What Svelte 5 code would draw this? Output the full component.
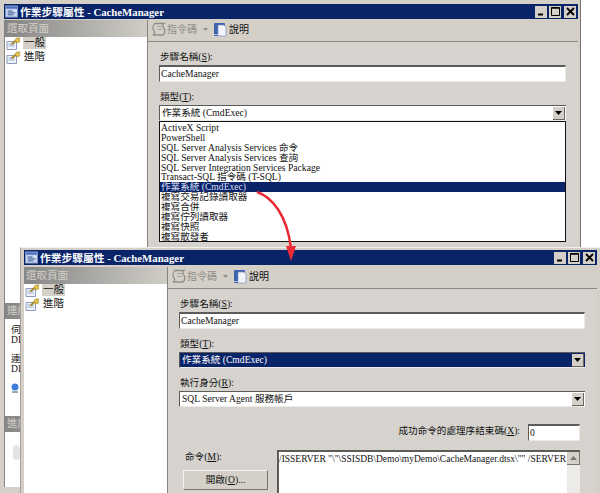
<script>
  const options = [
    'ActiveX Script',
    'PowerShell',
    'SQL Server Analysis Services 命令',
    'SQL Server Analysis Services 查詢',
    'SQL Server Integration Services Package',
    'Transact-SQL 指令碼 (T-SQL)',
    '作業系統 (CmdExec)',
    '複寫交易記錄讀取器',
    '複寫合併',
    '複寫佇列讀取器',
    '複寫快照',
    '複寫散發者'
  ];
  const selected = '作業系統 (CmdExec)';
</script>

{#snippet pageIcon()}
  <svg class="page-icon" width="15" height="13" viewBox="0 0 15 13">
    <path d="M1 4.5h9.5v8H1z" fill="#eef2fa" stroke="#8d9ab8" />
    <path d="M2.5 7h6M2.5 9h6" stroke="#9db0d6" />
    <path d="M5.5 7.5 10 3.5" stroke="#a88a2a" stroke-width="2" />
    <path d="M9 3.5 10.5 1H14l-1 2 1 1.5-2.5 1.5z" fill="#e6c445" stroke="#9a7f22" stroke-width=".6" />
  </svg>
{/snippet}

{#snippet caption()}
  <div class="titlebar">
    <svg class="win-icon" width="13" height="13" viewBox="0 0 14 13">
      <rect x=".5" y=".5" width="13" height="12" fill="#c5d3ef" stroke="#7f93c4" />
      <rect x="1" y="1" width="12" height="2.5" fill="#4a6fc0" />
      <path d="M3 6h5M3 8h8M3 10h6" stroke="#33508f" />
      <path d="M9 5.5 12 4.5 11.5 7z" fill="#e9edf7" />
    </svg>
    <span class="title">作業步驟屬性 - CacheManager</span>
    <div class="buttons">
      <span class="wbtn"><svg width="11" height="11" viewBox="0 0 11 11"><path d="M2 8.5h5" stroke="#000" stroke-width="2" /></svg></span>
      <span class="wbtn"><svg width="11" height="11" viewBox="0 0 11 11"><path d="M1.5 1.5h8v8h-8z" fill="none" stroke="#000" /><path d="M1.5 2h8" stroke="#000" stroke-width="1.5" /></svg></span>
      <span class="wbtn close"><svg width="11" height="11" viewBox="0 0 11 11"><path d="m2 2 7 7M9 2 2 9" stroke="#000" stroke-width="1.8" /></svg></span>
    </div>
  </div>
{/snippet}

{#snippet pages()}
  <div class="side-head">選取頁面</div>
  <ul class="pages">
    <li>{@render pageIcon()}<span class="active">一般</span></li>
    <li>{@render pageIcon()}<span>進階</span></li>
  </ul>
{/snippet}

{#snippet toolbar()}
  <div class="toolbar">
    <svg width="16" height="15" viewBox="0 0 16 15">
      <path d="M4 1.5h9c-1.5 1-1.5 3 0 5 1.5 2 1 5-1 6.5H2c2-1 2-3 .5-5C1.500 6 2 3 4 1.500z" fill="none" stroke="#8e8e88" stroke-width="1.300" />
      <path d="M6 4.500h5M6 7.500h5" stroke="#a8a8a2" />
    </svg>
    <span class="disabled">指令碼</span>
    <svg class="drop" width="5" height="3" viewBox="0 0 5 3"><path d="M0 0h5L2.500 3z" fill="#8e8e88" /></svg>
    <svg class="help" width="14" height="15" viewBox="0 0 14 15">
      <rect x="1" y="1" width="11" height="13" rx="1" fill="#3e62ad" />
      <path d="M5 3h6l2 2v9H5z" fill="#f3f5fb" stroke="#7c8fbe" stroke-width=".7" />
      <path d="M1 12.500h4" stroke="#a9bbe2" />
    </svg>
    <span>說明</span>
  </div>
{/snippet}

<div class="screen">
  <section class="window first">
    {@render caption()}
    <div class="body">
      <aside class="side">
        {@render pages()}
        <div class="side-head low">連線</div>
        <div class="conn">
          <p>伺服器:<br />DI</p>
          <p>連線:<br />DI</p>
          <svg width="8" height="11" viewBox="0 0 8 11"><circle cx="4" cy="4" r="3.500" fill="#3f7ddb" /><path d="M1 9h6" stroke="#9aa" stroke-width="2" /></svg>
        </div>
        <div class="side-head low">進度</div>
        <div class="spin"></div>
      </aside>
      <main class="panel">
        {@render toolbar()}
        <div class="form">
          <label class="lab" for="n1">步驟名稱(<u>S</u>):</label>
          <input id="n1" class="input" value="CacheManager" readonly />
          <div class="lab gap">類型(<u>T</u>):</div>
          <div class="combo-wrap">
            <div class="combo">
              <span class="val">作業系統 (CmdExec)</span>
              <span class="arrow"><svg width="7" height="4" viewBox="0 0 7 4"><path d="M0 0h7L3.500 4z" fill="#000" /></svg></span>
            </div>
            <ul class="list">
              {#each options as o}
                <li class:sel={o === selected}>{o}</li>
              {/each}
            </ul>
          </div>
        </div>
      </main>
    </div>
  </section>

  <section class="window second">
    {@render caption()}
    <div class="body">
      <aside class="side">
        {@render pages()}
      </aside>
      <main class="panel">
        {@render toolbar()}
        <div class="form">
          <label class="lab" for="n2">步驟名稱(<u>S</u>):</label>
          <input id="n2" class="input" value="CacheManager" readonly />
          <div class="lab gap">類型(<u>T</u>):</div>
          <div class="combo focus">
            <span class="val">作業系統 (CmdExec)</span>
            <span class="arrow"><svg width="7" height="4" viewBox="0 0 7 4"><path d="M0 0h7L3.500 4z" fill="#000" /></svg></span>
          </div>
          <div class="lab gap">執行身分(<u>R</u>):</div>
          <div class="combo">
            <span class="val">SQL Server Agent 服務帳戶</span>
            <span class="arrow"><svg width="7" height="4" viewBox="0 0 7 4"><path d="M0 0h7L3.500 4z" fill="#000" /></svg></span>
          </div>
          <div class="exit-row">
            <span class="lab">成功命令的處理序結束碼(<u>X</u>):</span>
            <input class="input code" value="0" readonly />
          </div>
          <div class="cmd-row">
            <div class="cmd-left">
              <div class="lab cmd-lab">命令(<u>M</u>):</div>
              <button class="open">開啟(<u>O</u>)...</button>
            </div>
            <div class="cmd-box">
              <div class="cmd-text">/ISSERVER "\"\SSISDB\Demo\myDemo\CacheManager.dtsx\"" /SERVER</div>
              <div class="scroll">
                <span class="up"><svg width="7" height="4" viewBox="0 0 7 4"><path d="M0 4h7L3.500 0z" fill="#777" /></svg></span>
              </div>
            </div>
          </div>
        </div>
      </main>
    </div>
  </section>

  <svg class="arrow-over" width="600" height="493" viewBox="0 0 600 493">
    <path d="M257 192C272 197 287 215 291 248" fill="none" stroke="#ea2a35" stroke-width="2.500" />
    <path d="M286 246h10l-5 15z" fill="#ea2a35" />
  </svg>
</div>

<style>
  :global(body) {
    margin: 0;
    background: #fff;
  }
  .screen {
    position: relative;
    width: 600px;
    height: 493px;
    overflow: hidden;
    background: #fff;
    font-family: "Liberation Serif", "Noto Sans CJK TC", serif;
    font-size: 9.600px;
    line-height: 12px;
    color: #111;
  }
  .window {
    position: absolute;
    box-sizing: border-box;
    display: flex;
    flex-direction: column;
    background: #d4d0c8;
  }
  .first {
    left: 0;
    top: 0;
    width: 581px;
    height: 493px;
    padding: 4px 2px 0 4px;
    border-right: 1px solid #77756f;
  }
  .second {
    left: 20px;
    top: 247px;
    width: 580px;
    height: 246px;
    padding: 2px 3px 0 3px;
    border-left: 1px solid #a4a19a;
    border-top: 1px solid #f2f1ed;
  }
  .titlebar {
    flex: none;
    height: 15px;
    display: flex;
    align-items: center;
    gap: 2px;
    padding: 0 2px 0 1px;
    background: #0a246a;
    color: #fff;
    font-size: 10.750px;
    font-weight: 700;
  }
  .win-icon {
    flex: none;
  }
  .title {
    white-space: nowrap;
  }
  .buttons {
    margin-left: auto;
    display: flex;
    gap: 2px;
  }
  .wbtn {
    width: 12px;
    height: 12px;
    display: flex;
    align-items: center;
    justify-content: center;
    background: #d4d0c8;
  }
  .close {
    margin-left: 1px;
  }
  .body {
    flex: 1;
    min-height: 0;
    display: flex;
    margin-top: 2px;
  }
  .first .body {
    margin-top: 1px;
  }
  .side {
    flex: none;
    box-sizing: border-box;
    width: 144px;
    display: flex;
    flex-direction: column;
    background: #fff;
    border-right: 1px solid #85837d;
  }
  .first .side {
    margin-bottom: 6px;
    border-left: 1px solid #85837d;
  }
  .side-head {
    flex: none;
    height: 17px;
    padding-left: 2px;
    display: flex;
    align-items: center;
    color: #d4d0c8;
    font-size: 10.500px;
    background: linear-gradient(90deg, #858585, #d0cdc6);
  }
  .low {
    height: 16px;
  }
  .pages {
    flex: 1;
    margin: -1px 0 0;
    padding: 0 0 0 1px;
    list-style: none;
    font-size: 10.500px;
  }
  .pages li {
    height: 14px;
    display: flex;
    align-items: center;
    gap: 2px;
  }
  .active {
    background: #d4d0c8;
    padding: 0 1px;
  }
  .pages li span:not(.active) {
    margin-left: 1px;
  }
  .first .pages {
    flex: none;
    height: 267px;
  }
  .conn {
    flex: none;
    height: 97px;
    padding-left: 6px;
    box-sizing: border-box;
    padding-top: 6px;
  }
  .conn p {
    margin: 0 0 9px;
    line-height: 10px;
    white-space: nowrap;
  }
  .spin {
    flex: 1;
    margin: 13px 0 0 8px;
    width: 7px;
    max-height: 15px;
    border-radius: 4px;
    background: #e4e4e4;
  }
  .panel {
    flex: 1;
    min-width: 0;
    display: flex;
    flex-direction: column;
  }
  .toolbar {
    flex: none;
    box-sizing: border-box;
    height: 22px;
    padding: 0 0 2px 3px;
    display: flex;
    align-items: center;
    gap: 0;
    border-bottom: 1px solid #8a8882;
    font-size: 10px;
  }
  .disabled {
    color: #8f8d87;
  }
  .drop {
    margin: 0 5px 0 6px;
  }
  .help {
    margin: 0 2px 0 0;
  }
  .form {
    flex: 1;
    min-height: 0;
    padding: 9px 12px 0 11px;
    display: flex;
    flex-direction: column;
    background: #d6d3ce;
  }
  .lab {
    display: block;
    flex: none;
    height: 12px;
    margin: 0 0 2px 1px;
    white-space: nowrap;
  }
  .gap {
    margin-top: 9px;
  }
  .input {
    box-sizing: border-box;
    flex: none;
    width: 100%;
    height: 17px;
    padding: 0 0 1px 1px;
    border: 0;
    border-top: 2px solid #5e5c58;
    border-left: 1px solid #5e5c58;
    border-right: 1px solid #ecebe7;
    border-bottom: 1px solid #ecebe7;
    outline: none;
    background: #fff;
    font: inherit;
    color: #111;
  }
  .combo-wrap {
    position: relative;
    flex: none;
  }
  .combo {
    box-sizing: border-box;
    flex: none;
    height: 16px;
    display: flex;
    align-items: center;
    justify-content: space-between;
    padding: 1px 1px 1px 2px;
    background: #fff;
    border-top: 1px solid #5e5c58;
    border-left: 1px solid #5e5c58;
    border-bottom: 1px solid #ecebe7;
    white-space: nowrap;
  }
  .focus {
    background: #0a246a;
    color: #fff;
  }
  .arrow {
    flex: none;
    width: 12px;
    height: 13px;
    display: flex;
    align-items: center;
    justify-content: center;
    background: #d4d0c8;
    border-right: 1px solid #666;
    border-bottom: 1px solid #666;
    box-sizing: border-box;
  }
  .list {
    position: absolute;
    z-index: 2;
    top: 16px;
    left: 0;
    right: 0;
    margin: 0;
    padding: 1px 0 0;
    height: 121px;
    box-sizing: border-box;
    list-style: none;
    background: #fff;
    border: 1px solid #111;
    overflow: hidden;
    line-height: 10px;
  }
  .list li {
    height: 9.900px;
    padding-left: 1px;
    white-space: nowrap;
  }
  .sel {
    background: #0a246a;
    color: #d8def0;
  }
  .exit-row {
    flex: none;
    margin-top: 17px;
    height: 17px;
    display: flex;
    align-items: center;
    justify-content: flex-end;
    gap: 8px;
    padding-right: 5px;
  }
  .exit-row .lab {
    margin: 0 0 3px;
  }
  .code {
    width: 52px;
  }
  .cmd-row {
    flex: 1;
    min-height: 0;
    margin-top: 9px;
    display: flex;
    padding-right: 5px;
  }
  .cmd-left {
    flex: none;
    width: 98px;
    padding-left: 4px;
    box-sizing: border-box;
  }
  .cmd-lab {
    margin: 1px 0 7px 2px;
  }
  .open {
    display: block;
    box-sizing: border-box;
    width: 85px;
    height: 20px;
    padding: 0;
    background: #d4d0c8;
    border: 0;
    border-right: 1px solid #77756f;
    border-bottom: 1px solid #77756f;
    border-top: 1px solid #f4f3ef;
    border-left: 1px solid #f4f3ef;
    font: inherit;
    color: #111;
  }
  .cmd-box {
    flex: 1;
    min-width: 0;
    display: flex;
    box-sizing: border-box;
    background: #fff;
    border-top: 2px solid #5e5c58;
    border-left: 2px solid #5e5c58;
    margin-bottom: -4px;
  }
  .cmd-text {
    flex: 1;
    min-width: 0;
    overflow: hidden;
    white-space: nowrap;
    padding-top: 1px;
    font-size: 9.500px;
  }
  .scroll {
    flex: none;
    width: 13px;
    background: #ecebe7;
  }
  .up {
    display: flex;
    width: 13px;
    height: 13px;
    align-items: center;
    justify-content: center;
    background: #d4d0c8;
    box-sizing: border-box;
    border-right: 1px solid #77756f;
    border-bottom: 1px solid #77756f;
  }
  u {
    text-decoration: underline;
  }
  .arrow-over {
    position: absolute;
    left: 0;
    top: 0;
    z-index: 3;
    pointer-events: none;
  }
</style>
